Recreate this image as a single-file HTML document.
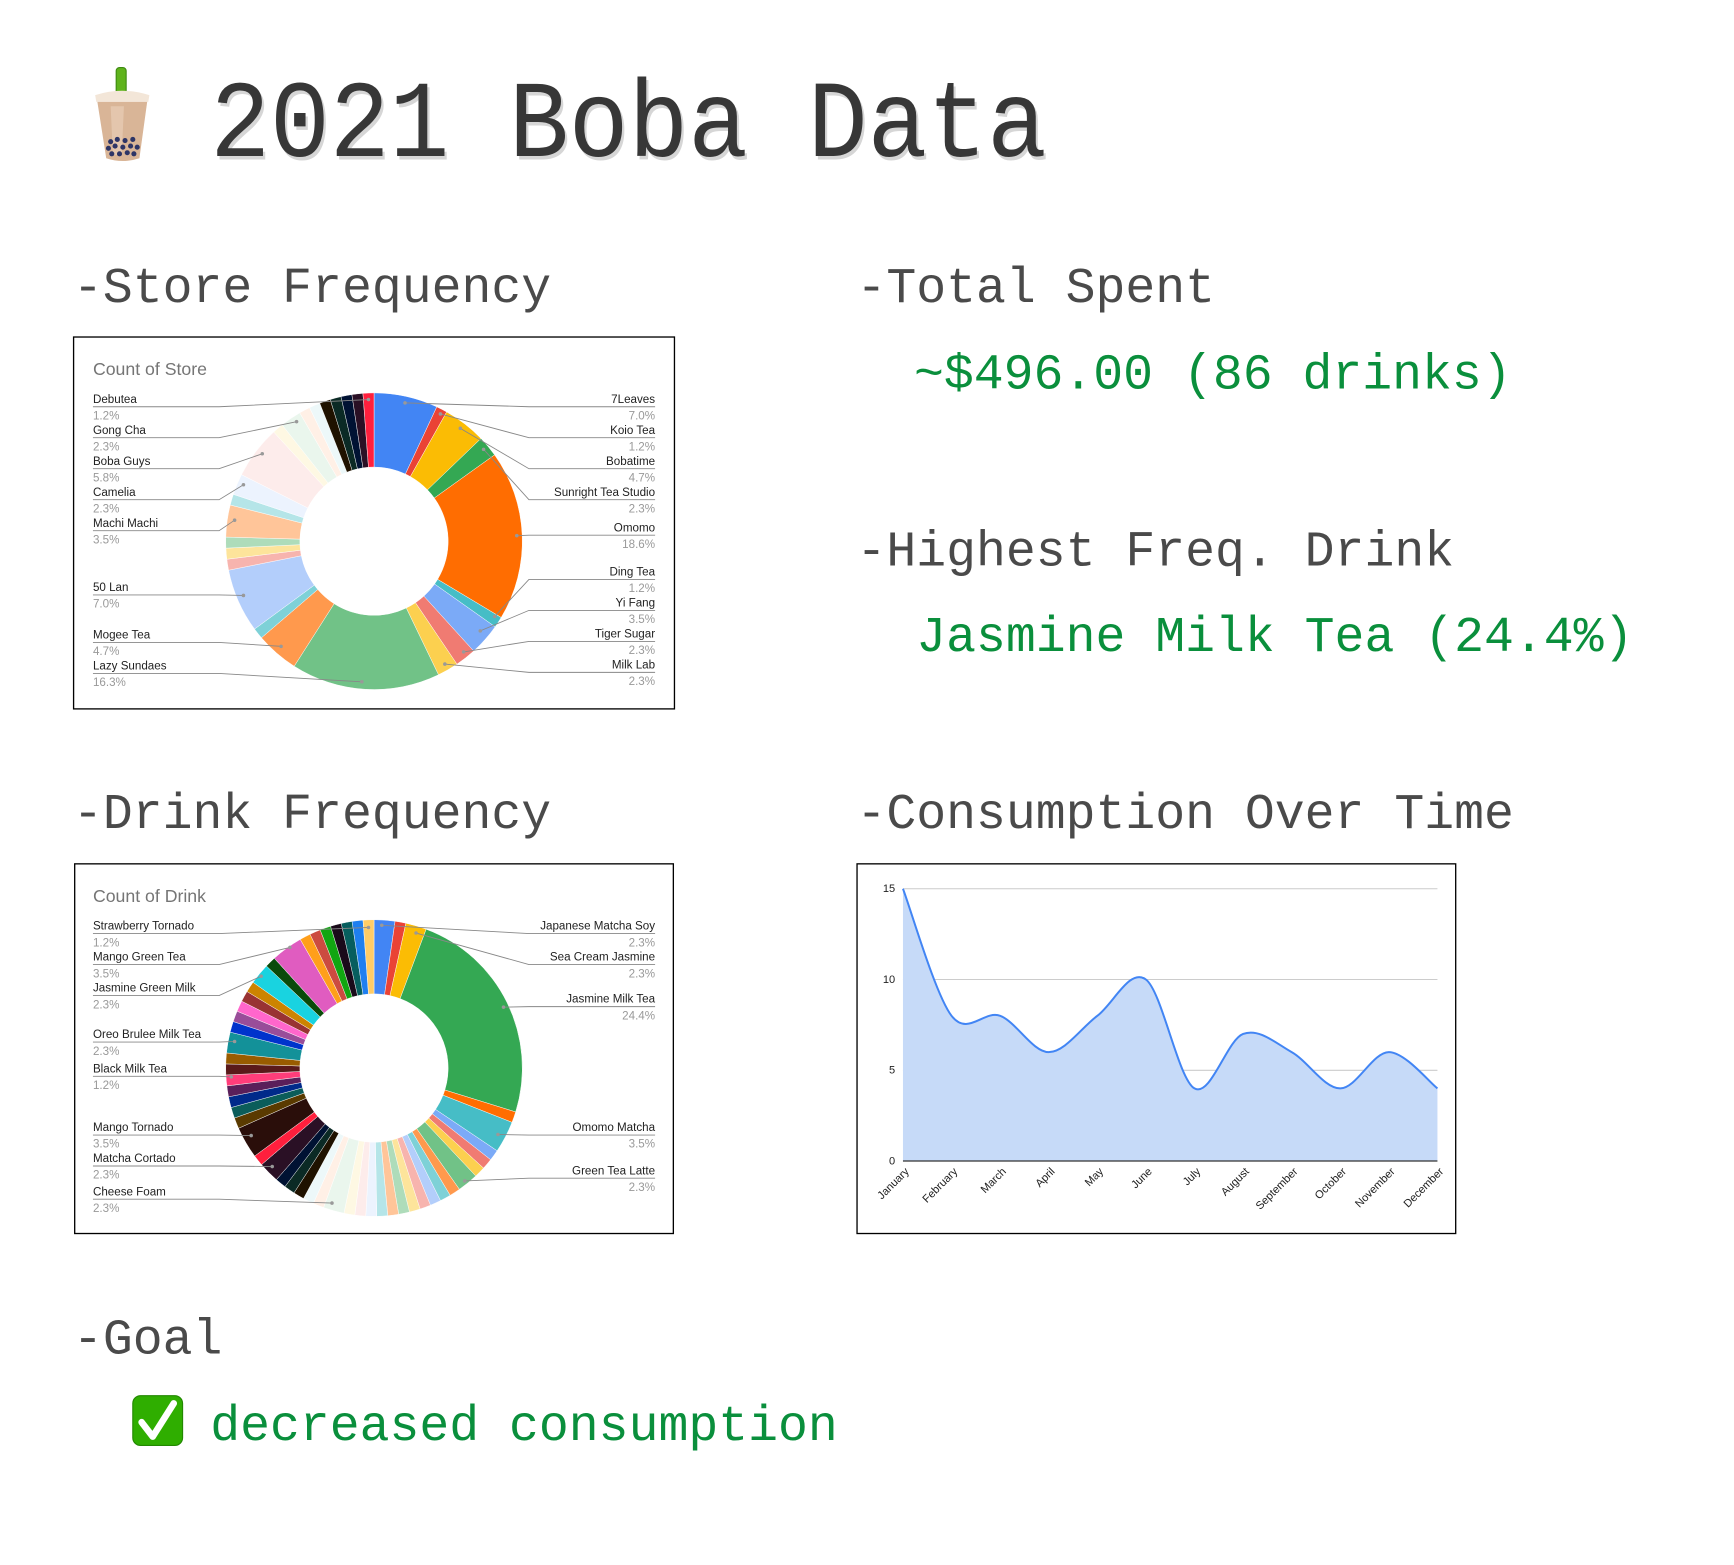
<!DOCTYPE html>
<html><head><meta charset="utf-8"><style>html,body{margin:0;padding:0;background:#fff}svg{display:block}</style></head>
<body>
<svg id="s" xmlns="http://www.w3.org/2000/svg" width="1734" height="1565" viewBox="0 0 1567 1414" preserveAspectRatio="none">
<rect width="1567" height="1414" fill="#fff"/>
<!-- boba emoji -->
<g>
<rect x="105" y="61" width="9" height="28" rx="3" fill="#5fb31c" stroke="#3d8a10" stroke-width="1"/>
<path d="M86 86 Q110 78 135 86 L134 92 L87 92 Z" fill="#f3e6d8"/>
<path d="M88 92 L133 92 L126 143 Q111 148 96 143 Z" fill="#d9b597"/>
<path d="M100 96 L112 96 L110 140 L102 140 Z" fill="#e8cdb6" opacity="0.7"/>
<g fill="#2e3566">
<circle cx="100" cy="128" r="2.3"/><circle cx="106" cy="126" r="2.3"/><circle cx="113" cy="127" r="2.3"/><circle cx="120" cy="126" r="2.3"/>
<circle cx="98" cy="134" r="2.3"/><circle cx="104" cy="132" r="2.3"/><circle cx="111" cy="133" r="2.3"/><circle cx="118" cy="132" r="2.3"/><circle cx="124" cy="133" r="2.3"/>
<circle cx="101" cy="139" r="2.3"/><circle cx="108" cy="139" r="2.3"/><circle cx="115" cy="138" r="2.3"/><circle cx="121" cy="139" r="2.3"/>
</g>
</g>
<g font-family="Liberation Mono, monospace">
<g transform="translate(190,141) scale(1,1.1)"><text x="2" y="3" font-size="90" fill="#bbb" opacity="0.6">2021 Boba Data</text><text x="0" y="0" font-size="90" fill="#373737">2021 Boba Data</text></g>
<g font-size="45" fill="#4a4a4a">
<text x="66" y="273">-Store Frequency</text>
<text x="774" y="273">-Total Spent</text>
<text x="774" y="511">-Highest Freq. Drink</text>
<text x="66" y="748">-Drink Frequency</text>
<text x="774" y="748">-Consumption Over Time</text>
<text x="66" y="1223">-Goal</text>
</g>
<g font-size="45" fill="#0a8f3c">
<text x="826" y="351">~$496.00 (86 drinks)</text>
<text x="828" y="588">Jasmine Milk Tea (24.4%)</text>
<text x="190" y="1301">decreased consumption</text>
</g>
</g>
<!-- check emoji -->
<rect x="120" y="1261" width="45" height="45" rx="7" fill="#2fae00" stroke="#228800" stroke-width="1"/>
<path d="M128 1285 L138 1298 L157 1268" fill="none" stroke="#fff" stroke-width="6" stroke-linecap="round" stroke-linejoin="round"/>

<!-- chart boxes -->
<rect x="66.5" y="304.5" width="543" height="336" fill="#fff" stroke="#000" stroke-width="1.2"/>
<rect x="67.5" y="780.5" width="541" height="334" fill="#fff" stroke="#000" stroke-width="1.2"/>
<rect x="774.5" y="780.5" width="541" height="334" fill="#fff" stroke="#000" stroke-width="1.2"/>
<g id="store"></g>
<g id="drink"></g>
<g id="line"></g>
<g font-family="Liberation Sans, Arial, sans-serif">
<text x="84" y="339" font-size="16" fill="#757575">Count of Store</text>
<text x="84" y="815" font-size="16" fill="#757575">Count of Drink</text>
<g id="labels" font-size="10.5"></g>
</g>
</svg>
<script>
var NS="http://www.w3.org/2000/svg";
function el(t,a,p){var e=document.createElementNS(NS,t);for(var k in a)e.setAttribute(k,a[k]);p.appendChild(e);return e;}
function donut(g,cx,cy,R,r,sl){
 var tot=0;sl.forEach(function(s){tot+=s[1];});
 var a=-Math.PI/2;
 sl.forEach(function(s){
  var b=a+s[1]/tot*2*Math.PI;
  var L=(b-a)>Math.PI?1:0;
  var d="M"+(cx+R*Math.cos(a))+" "+(cy+R*Math.sin(a))+" A"+R+" "+R+" 0 "+L+" 1 "+(cx+R*Math.cos(b))+" "+(cy+R*Math.sin(b))+
  " L"+(cx+r*Math.cos(b))+" "+(cy+r*Math.sin(b))+" A"+r+" "+r+" 0 "+L+" 0 "+(cx+r*Math.cos(a))+" "+(cy+r*Math.sin(a))+"Z";
  el("path",{d:d,fill:s[0],stroke:"#fff","stroke-width":"0.4"},g);
  a=b;
 });
}
donut(document.getElementById("store"),338,489,134,67,[
["#4285f4",7],["#ea4335",1.2],["#fbbc04",4.7],["#34a853",2.3],["#ff6d01",18.6],["#46bdc6",1.2],["#7baaf7",3.5],["#f07b72",2.3],["#fcd04f",2.3],["#71c287",16.3],["#ff994d",4.7],["#7ed1d7",1.2],["#b3cefb",7],["#f7b4ae",1.2],["#fde49b",1.2],["#aedcba",1.2],["#ffc599",3.5],["#b5e5e8",1.2],["#ecf3fe",2.3],["#fdeceb",5.8],["#fef8e3",1.2],["#eaf6ed",2.3],["#fff0e6",1.2],["#edf8f9",1.2],["#1f1200",1.2],["#0b2a25",1.2],["#001233",1.2],["#2a1025",1.2],["#ff1f3d",1.2]]);
donut(document.getElementById("drink"),338,965,134,67,[
["#4285f4",2.3],["#ea4335",1.2],["#fbbc04",2.3],["#34a853",24.4],["#ff6d01",1.2],["#46bdc6",3.5],["#7baaf7",1.2],["#f07b72",1.2],["#fcd04f",1.2],["#71c287",2.3],["#ff994d",1.2],["#7ed1d7",1.2],["#b3cefb",1.2],["#f7b4ae",1.2],["#fde49b",1.2],["#aedcba",1.2],["#ffc599",1.2],["#b5e5e8",1.2],["#ecf3fe",1.2],["#fdeceb",1.2],["#fef8e3",1.2],["#eaf6ed",2.3],["#fff0e6",1.2],["#edf8f9",1.2],["#1f1200",1.2],["#0b2a25",1.2],["#001233",1.2],["#2a1025",2.3],["#ff1f3d",1.2],["#2a0e0a",3.5],["#5a3a00",1.2],["#0b5d5a",1.2],["#002a8a",1.2],["#5a1f5a",1.2],["#ff3d7a",1.2],["#5a1a1a",1.2],["#995c00",1.2],["#139199",2.3],["#0033cc",1.2],["#994d99",1.2],["#ff66cc",1.2],["#993333",1.2],["#cc8400",1.2],["#19d3e0",2.3],["#0a4a0a",1.2],["#e05cc0",3.5],["#ff9f1a",1.2],["#cc4b40",1.2],["#11a611",1.2],["#1a0a1a",1.2],["#075e5e",1.2],["#1f7ff0",1.2],["#ffcc66",1.2]]);
var lab=document.getElementById("labels");
function L(side,name,pct,y,dx,dy){
 var left=side=="l";
 var x=left?84:592;
 el("text",{x:x,y:y,"text-anchor":left?"start":"end",fill:"#222"},lab).textContent=name;
 el("text",{x:x,y:y+15,"text-anchor":left?"start":"end",fill:"#999"},lab).textContent=pct;
 var ly=y+3.5, bx=left?198:478;
 el("polyline",{points:x+","+ly+" "+bx+","+ly+" "+dx+","+dy,fill:"none",stroke:"#888","stroke-width":"0.8"},lab);
 el("circle",{cx:dx,cy:dy,r:1.6,fill:"#999"},lab);
}
L("l","Debutea","1.2%",364,333,361);L("l","Gong Cha","2.3%",392,268,381);L("l","Boba Guys","5.8%",420,237,410);
L("l","Camelia","2.3%",448,220,438);L("l","Machi Machi","3.5%",476,212,470);L("l","50 Lan","7.0%",534,220,538);
L("l","Mogee Tea","4.7%",577,254,584);L("l","Lazy Sundaes","16.3%",605,327,616);
L("r","7Leaves","7.0%",364,366,364);L("r","Koio Tea","1.2%",392,398,374);L("r","Bobatime","4.7%",420,416,387);
L("r","Sunright Tea Studio","2.3%",448,437,406);L("r","Omomo","18.6%",480,467,484);L("r","Ding Tea","1.2%",520,447,557);
L("r","Yi Fang","3.5%",548,434,570);L("r","Tiger Sugar","2.3%",576,419,589);L("r","Milk Lab","2.3%",604,402,600);
L("l","Strawberry Tornado","1.2%",840,333,838);L("l","Mango Green Tea","3.5%",868,262,856);L("l","Jasmine Green Milk","2.3%",896,236,882);
L("l","Oreo Brulee Milk Tea","2.3%",938,212,941);L("l","Black Milk Tea","1.2%",969,209,973);L("l","Mango Tornado","3.5%",1022,227,1026);
L("l","Matcha Cortado","2.3%",1050,246,1054);L("l","Cheese Foam","2.3%",1080,300,1087);
L("r","Japanese Matcha Soy","2.3%",840,345,836);L("r","Sea Cream Jasmine","2.3%",868,376,843);L("r","Jasmine Milk Tea","24.4%",906,455,910);
L("r","Omomo Matcha","3.5%",1022,450,1025);L("r","Green Tea Latte","2.3%",1061,420,1067);
var lg=document.getElementById("line");
var x0=816,x1=1299,y0=1049,k=16.4;
[5,10,15].forEach(function(v){el("line",{x1:x0,x2:x1,y1:y0-v*k,y2:y0-v*k,stroke:"#ccc","stroke-width":"1"},lg);});
var vals=[15,8,8,6,8,10,4,7,6,4,6,4],P=vals.map(function(v,i){return [x0+i*(x1-x0)/11,y0-v*k];});
var d="M"+P[0][0]+" "+P[0][1];
for(var i=0;i<P.length-1;i++){var p0=P[Math.max(0,i-1)],p1=P[i],p2=P[i+1],p3=P[Math.min(P.length-1,i+2)];
 d+=" C"+(p1[0]+(p2[0]-p0[0])/6)+" "+(p1[1]+(p2[1]-p0[1])/6)+" "+(p2[0]-(p3[0]-p1[0])/6)+" "+(p2[1]-(p3[1]-p1[1])/6)+" "+p2[0]+" "+p2[1];}
el("path",{d:d+" L"+x1+" "+y0+" L"+x0+" "+y0+"Z",fill:"#c6daf8"},lg);
el("path",{d:d,fill:"none",stroke:"#4285f4","stroke-width":"1.8"},lg);
el("line",{x1:x0,x2:x1,y1:y0,y2:y0,stroke:"#333","stroke-width":"1.2"},lg);
[[0,1052],[5,970],[10,888],[15,806]].forEach(function(t){var e=el("text",{x:809,y:t[1],"text-anchor":"end","font-size":"10","font-family":"Liberation Sans, sans-serif",fill:"#222"},lg);e.textContent=t[0];});
["January","February","March","April","May","June","July","August","September","October","November","December"].forEach(function(m,i){
 var x=x0+i*(x1-x0)/11+6,y=y0+10;
 var e=el("text",{x:0,y:0,"text-anchor":"end","font-size":"10","font-family":"Liberation Sans, sans-serif",fill:"#222",transform:"translate("+x+","+y+") rotate(-45)"},lg);e.textContent=m;});
</script>
</body></html>
